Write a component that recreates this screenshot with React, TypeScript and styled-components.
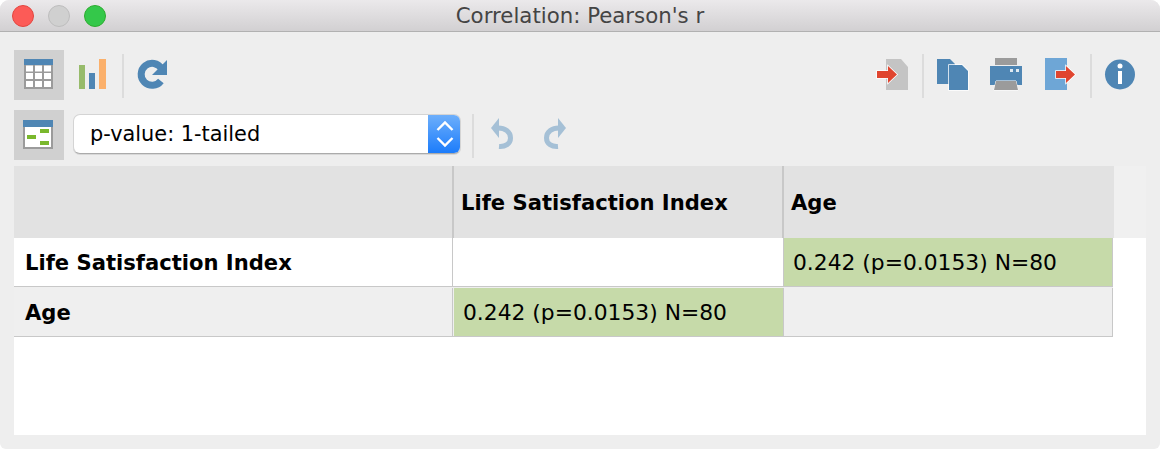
import React from 'react';
import styled, { createGlobalStyle } from 'styled-components';

const BLUE = '#4f86b4';
const GREY = '#9b9b9b';
const RED = '#e0452f';
const FADED = '#a5c0d6';

const GlobalStyle = createGlobalStyle`
  html, body {
    margin: 0;
    background: #fff;
  }
`;

const Icon = ({ children }: { children: React.ReactNode }) => (
  <svg width="50" height="50" viewBox="0 0 50 50">
    {children}
  </svg>
);

const TableIcon = () => (
  <Icon>
    <rect x="10" y="9" width="29" height="30" fill={GREY} />
    <rect x="10" y="9" width="29" height="6" fill={BLUE} />
    {[15.5, 23, 31].map((y) =>
      [12, 21, 30].map((x) => <rect key={`${x}-${y}`} x={x} y={y} width="7" height="6" fill="#fff" />),
    )}
  </Icon>
);

const ChartIcon = () => (
  <Icon>
    <rect x="12" y="15" width="6" height="24" fill="#97bb6b" />
    <rect x="22" y="23" width="6" height="16" fill={BLUE} />
    <rect x="32" y="9" width="7" height="30" fill="#fbb06b" />
  </Icon>
);

const RefreshIcon = () => (
  <Icon>
    <path d="M34.500 18.500A11 11 0 1 0 33.900 31" fill="none" stroke={BLUE} strokeWidth="7" />
    <polygon points="40,10 40,25 25,25" fill={BLUE} />
  </Icon>
);

const PanelIcon = () => (
  <Icon>
    <rect x="9" y="10" width="30" height="29" fill={GREY} />
    <rect x="11" y="17" width="26" height="20" fill="#fff" />
    <rect x="9" y="10" width="30" height="7" fill={BLUE} />
    <rect x="13" y="25" width="9" height="4" fill="#7ab82d" />
    <rect x="26" y="19" width="9" height="4" fill="#7ab82d" />
    <rect x="26" y="31" width="9" height="4" fill="#7ab82d" />
  </Icon>
);

const UndoIcon = ({ flip }: { flip?: boolean }) => (
  <Icon>
    <g transform={flip ? 'matrix(-1 0 0 1 50 0)' : undefined}>
      <polygon points="22,8 14,18 22,28" fill={FADED} />
      <path d="M20 18C28 17.500 33.500 22 33.500 28C33.500 34 28 37 22 36.500" fill="none" stroke={FADED} strokeWidth="5" />
    </g>
  </Icon>
);

const ImportIcon = () => (
  <Icon>
    <polygon points="19,9 34,9 41,17 41,40 19,40" fill="#c4c4c4" />
    <polygon
      points="10,21 21,21 21,16 30,24.500 21,33 21,28 10,28"
      fill={RED}
      stroke="#fff"
      strokeWidth="1.500"
      paintOrder="stroke"
    />
  </Icon>
);

const CopyIcon = () => (
  <Icon>
    <polygon points="8,9 21,9 26,14 26,34 8,34" fill={BLUE} />
    <polygon points="20,15 33,15 39,21 39,40 20,40" fill={BLUE} stroke="#fff" strokeWidth="1.500" paintOrder="stroke" />
  </Icon>
);

const PrintIcon = () => (
  <Icon>
    <rect x="13" y="8" width="22" height="7" fill={GREY} />
    <rect x="8" y="16" width="32" height="19" fill={BLUE} />
    <rect x="28" y="19" width="3" height="3" fill="#dfe9f1" />
    <rect x="34" y="19" width="3" height="3" fill="#dfe9f1" />
    <polygon points="14,31 34,31 36,40 12,40" fill={GREY} stroke="#fff" strokeWidth="1" paintOrder="stroke" />
  </Icon>
);

const ExportIcon = () => (
  <Icon>
    <rect x="10" y="8" width="22" height="32" fill="#6ea6d6" />
    <polygon
      points="21,21 31,21 31,16 40,24.500 31,33 31,28 21,28"
      fill={RED}
      stroke="#fff"
      strokeWidth="1.500"
      paintOrder="stroke"
    />
  </Icon>
);

const InfoIcon = () => (
  <Icon>
    <circle cx="25" cy="24.500" r="15" fill={BLUE} />
    <circle cx="25" cy="16" r="2.500" fill="#fff" />
    <rect x="23" y="21" width="4" height="13" fill="#fff" />
  </Icon>
);

export default function App() {
  return (
    <Window>
      <GlobalStyle />
      <TitleBar>
        <Lights>
          <Light $color="#fc5b57" $edge="#e2463f" />
          <Light $color="#d0d0d0" $edge="#bdbdbd" />
          <Light $color="#34c84a" $edge="#2dac2f" />
        </Lights>
        <Title>Correlation: Pearson's r</Title>
      </TitleBar>

      <ToolbarRow>
        <ToolButton $active>
          <TableIcon />
        </ToolButton>
        <ToolButton>
          <ChartIcon />
        </ToolButton>
        <Separator />
        <ToolButton>
          <RefreshIcon />
        </ToolButton>
        <Spacer />
        <ToolButton>
          <ImportIcon />
        </ToolButton>
        <Separator $after={2} />
        <ToolButton>
          <CopyIcon />
        </ToolButton>
        <ToolButton>
          <PrintIcon />
        </ToolButton>
        <ToolButton>
          <ExportIcon />
        </ToolButton>
        <Separator />
        <ToolButton>
          <InfoIcon />
        </ToolButton>
      </ToolbarRow>

      <ToolbarRow $second>
        <ToolButton $active>
          <PanelIcon />
        </ToolButton>
        <Select>
          <SelectLabel>p-value: 1-tailed</SelectLabel>
          <Stepper>
            <svg width="20" height="28" viewBox="0 0 20 28">
              <path d="M2.500 10L10 2.500L17.500 10M2.500 18L10 25.500L17.500 18" fill="none" stroke="#fff" strokeWidth="2.400" />
            </svg>
          </Stepper>
        </Select>
        <Separator $wide />
        <ToolButton>
          <UndoIcon />
        </ToolButton>
        <ToolButton>
          <UndoIcon flip />
        </ToolButton>
      </ToolbarRow>

      <TableArea>
        <HeaderRow>
          <HeaderCell />
          <HeaderCell>Life Satisfaction Index</HeaderCell>
          <HeaderCell>Age</HeaderCell>
        </HeaderRow>
        <BodyRow>
          <LabelCell>Life Satisfaction Index</LabelCell>
          <BodyCell />
          <BodyCell $hit>0.242 (p=0.0153) N=80</BodyCell>
        </BodyRow>
        <BodyRow $alt>
          <LabelCell>Age</LabelCell>
          <BodyCell $hit>0.242 (p=0.0153) N=80</BodyCell>
          <BodyCell />
        </BodyRow>
      </TableArea>
    </Window>
  );
}

const Window = styled.div`
  width: 1160px;
  height: 449px;
  display: flex;
  flex-direction: column;
  box-sizing: border-box;
  padding-bottom: 14px;
  overflow: hidden;
  background: #eeeeee;
  border-radius: 9px 9px 6px 6px;
  font-family: 'DejaVu Sans', sans-serif;
  color: #000;
`;

const TitleBar = styled.div`
  flex: none;
  height: 32px;
  box-sizing: border-box;
  display: grid;
  grid-template-columns: 1fr auto 1fr;
  align-items: center;
  padding-left: 12px;
  background: linear-gradient(#ebe9eb, #d2d0d2);
  border-bottom: 1px solid #b1b1b1;
`;

const Lights = styled.div`
  display: flex;
  gap: 14px;
`;

const Light = styled.span<{ $color: string; $edge: string }>`
  width: 22px;
  height: 22px;
  box-sizing: border-box;
  border-radius: 50%;
  background: ${({ $color }) => $color};
  border: 1px solid ${({ $edge }) => $edge};
`;

const Title = styled.div`
  margin-right: 12px;
  font-size: 21.300px;
  color: #444;
  white-space: nowrap;
`;

const ToolbarRow = styled.div<{ $second?: boolean }>`
  flex: none;
  display: flex;
  gap: 3px;
  height: 50px;
  padding: 0 15px 0 14px;
  margin-top: ${({ $second }) => ($second ? '10px' : '18px')};
`;

const ToolButton = styled.div<{ $active?: boolean }>`
  flex: none;
  width: 50px;
  height: 50px;
  background: ${({ $active }) => ($active ? '#d0d0d0' : 'transparent')};

  svg {
    display: block;
  }
`;

const Separator = styled.div<{ $wide?: boolean; $after?: number }>`
  flex: none;
  width: 2px;
  height: 44px;
  margin: 4px ${({ $after }) => $after ?? 0}px 0 ${({ $wide }) => ($wide ? '8px' : '2px')};
  background: #dcdcdc;
`;

const Spacer = styled.div`
  flex: 1;
`;

const Select = styled.div`
  flex: none;
  box-sizing: border-box;
  width: 388px;
  height: 40px;
  margin: 4px 0 0 6px;
  display: flex;
  overflow: hidden;
  background: #fff;
  border-radius: 7px;
  border: 1px solid #d4d4d4;
  border-bottom-color: #ababab;
  box-shadow: 0 1px 0 #d8d8d8;
`;

const SelectLabel = styled.div`
  flex: 1;
  padding-left: 16px;
  line-height: 38px;
  font-size: 20.850px;
`;

const Stepper = styled.div`
  flex: none;
  width: 33px;
  margin: -1px -1px -1px 0;
  display: flex;
  align-items: center;
  justify-content: center;
  background: linear-gradient(#6fb0fb, #1a7bfb);
`;

const TableArea = styled.div`
  flex: 1;
  margin: 6px 14px 0;
  background: #fff;
`;

const HeaderRow = styled.div`
  height: 72px;
  display: grid;
  grid-template-columns: 440px 330px 330px;
  background: #f0f0f0;
`;

const HeaderCell = styled.div`
  box-sizing: border-box;
  display: flex;
  align-items: center;
  padding-left: 7px;
  background: #e2e2e2;
  border-right: 2px solid #c8c8c8;
  font-size: 21.100px;
  font-weight: 700;

  &:last-child {
    border-right: none;
  }
`;

const BodyRow = styled.div<{ $alt?: boolean }>`
  height: ${({ $alt }) => ($alt ? '50px' : '49px')};
  display: grid;
  grid-template-columns: 440px 330px 329px;
  background: ${({ $alt }) => ($alt ? '#efefef' : '#fff')};
  width: 1099px;
  box-sizing: border-box;
  padding-top: ${({ $alt }) => ($alt ? '1px' : '0')};
  border-bottom: 1px solid #c8c8c8;
`;

const LabelCell = styled.div`
  box-sizing: border-box;
  display: flex;
  align-items: center;
  margin-right: 1px;
  padding-left: 11px;
  border-right: 1px solid #c8c8c8;
  font-size: 21.100px;
  font-weight: 700;
`;

const BodyCell = styled.div<{ $hit?: boolean }>`
  box-sizing: border-box;
  display: flex;
  align-items: center;
  padding-left: 9px;
  font-size: 21.800px;
  background: ${({ $hit }) => ($hit ? '#c6daa9' : 'transparent')};
  border-right: 1px solid #c8c8c8;
`;
